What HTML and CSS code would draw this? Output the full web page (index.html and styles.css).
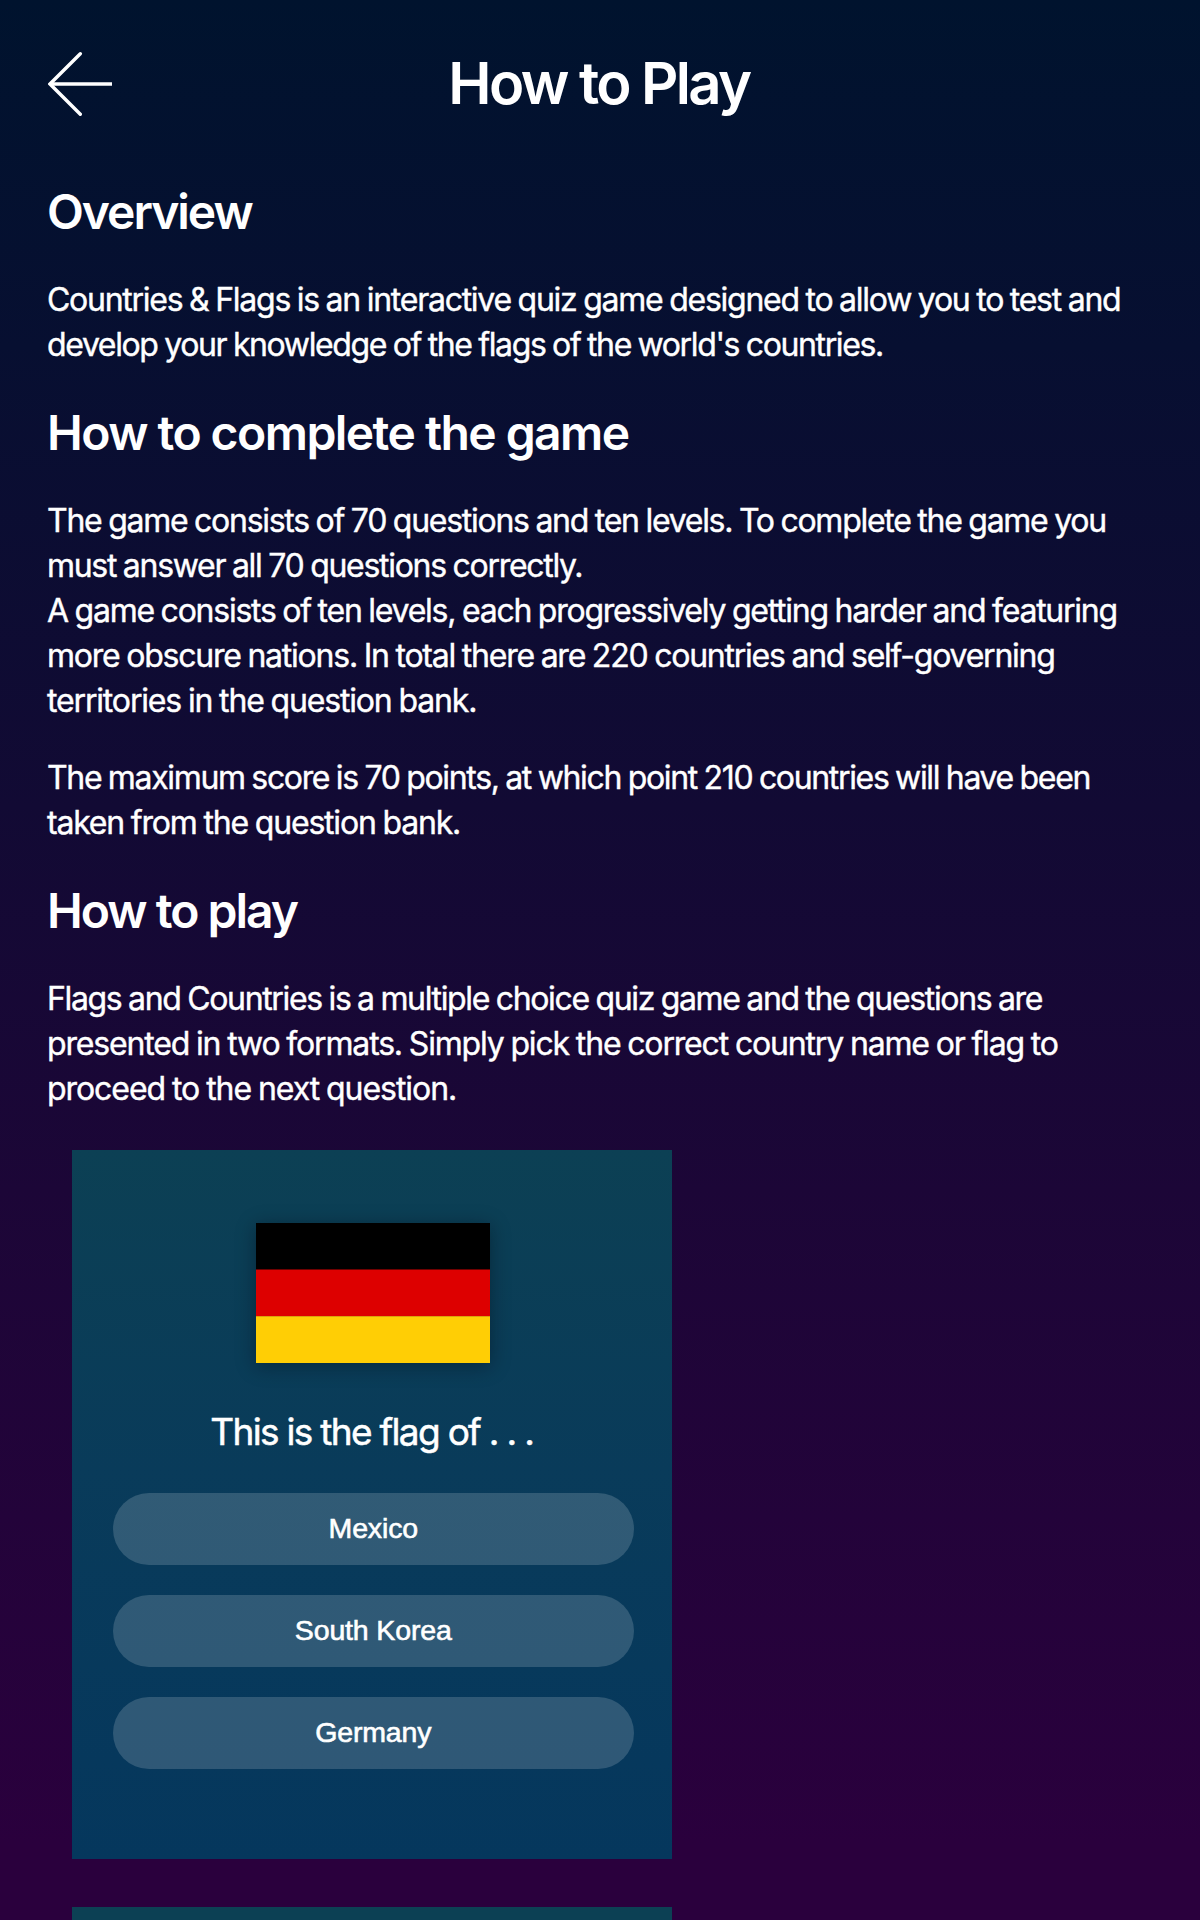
FILE: index.html
```
<!DOCTYPE html>
<html lang="en">
<head>
<meta charset="utf-8">
<title>How to Play</title>
<link rel="stylesheet" href="styles.css">
</head>
<body>
<header class="bar">
  <a class="back" aria-label="Back">
    <svg width="64" height="64" viewBox="0 0 64 64" fill="none" stroke="#fff" stroke-width="3.4"><path d="M32.300 1.800L2 32l30.300 30.200" stroke-linecap="round" stroke-linejoin="miter"/><path d="M2 32h62"/></svg>
  </a>
  <h1 class="title">How to Play</h1>
</header>
<main class="content">
  <h2 class="heading h-overview">Overview</h2>
  <p class="copy">
    <span class="line l1">Countries &amp; Flags is an interactive quiz game designed to allow you to test and</span>
    <span class="line l2">develop your knowledge of the flags of the world's countries.</span>
  </p>
  <h2 class="heading h-complete">How to complete the game</h2>
  <p class="copy">
    <span class="line l3">The game consists of 70 questions and ten levels. To complete the game you</span>
    <span class="line l4">must answer all 70 questions correctly.</span>
    <span class="line l5">A game consists of ten levels, each progressively getting harder and featuring</span>
    <span class="line l6">more obscure nations. In total there are 220 countries and self-governing</span>
    <span class="line l7">territories in the question bank.</span>
  </p>
  <p class="copy">
    <span class="line l8">The maximum score is 70 points, at which point 210 countries will have been</span>
    <span class="line l9">taken from the question bank.</span>
  </p>
  <h2 class="heading h-play">How to play</h2>
  <p class="copy">
    <span class="line l10">Flags and Countries is a multiple choice quiz game and the questions are</span>
    <span class="line l11">presented in two formats. Simply pick the correct country name or flag to</span>
    <span class="line l12">proceed to the next question.</span>
  </p>
  <section class="card">
    <svg class="flag" width="234" height="140" viewBox="0 0 234 140"><path fill="#000" d="M0 0h234v47H0z"/><path fill="#d00" d="M0 46.500h234v47H0z"/><path fill="#ffce05" d="M0 93.300h234V140H0z"/></svg>
    <div class="prompt">This is the flag of . . .</div>
    <div class="answers">
      <div class="answer">Mexico</div>
      <div class="answer">South Korea</div>
      <div class="answer">Germany</div>
    </div>
  </section>
  <section class="card-next"></section>
</main>
</body>
</html>
```
FILE: styles.css
```
* { box-sizing: border-box; }
html { background: #2a003d; }
body {
  display: flex;
  flex-direction: column;
  margin: 0;
  height: 1920px;
  background: linear-gradient(#00132e, #070f31 18%, #120a34 42%, #1c0637 62%, #2a003d 96%);
  color: #fff;
  font-family: Inter, "Liberation Sans", sans-serif;
}
.bar {
  display: grid;
  flex: none;
  grid-template-columns: 64px 1fr 64px;
  align-items: center;
  height: 168px;
  padding: 0 48px;
}
.back { display: block; height: 64px; }
.back svg { display: block; }
.title {
  margin: 0;
  padding: 0 2px 3px 0;
  text-align: center;
  font-size: 58px;
  line-height: 80px;
  font-weight: 600;
  letter-spacing: -2.6px;
}
.content {
  display: flex;
  flex: 1;
  flex-direction: column;
  padding: 10px 48px 0;
}
.heading {
  margin: 0 0 32px -1px;
  font-size: 48px;
  line-height: 67px;
  font-weight: 600;
}
.copy {
  margin: 0 0 32px -1px;
  font-size: 32px;
  line-height: 45px;
  word-spacing: -1px;
  -webkit-text-stroke: .4px #fff;
}
.line { display: block; white-space: nowrap; }
.h-overview { letter-spacing: -2.05px; }
.h-complete { letter-spacing: -1.55px; }
.h-play { letter-spacing: -2px; }
.l1 { letter-spacing: -1.26px; }
.l2 { letter-spacing: -1.37px; }
.l3 { letter-spacing: -1.27px; }
.l4 { letter-spacing: -1.29px; }
.l5 { letter-spacing: -1.25px; }
.l6 { letter-spacing: -1.23px; }
.l7 { letter-spacing: -1.16px; }
.l8 { letter-spacing: -1.34px; }
.l9 { letter-spacing: -1.19px; }
.l10 { letter-spacing: -1.34px; }
.l11 { letter-spacing: -1.16px; }
.l12 { letter-spacing: -1.06px; }
.card {
  display: flex;
  flex: none;
  flex-direction: column;
  align-items: center;
  width: 600px;
  height: 709px;
  margin: 7px 0 48px 24px;
  padding: 73px 38px 0 40.500px;
  background: linear-gradient(#0c4054, #093b5a 45%, #05375d);
}
.card-next {
  flex: 1;
  width: 600px;
  margin-left: 24px;
  background: #0c4054;
}
.flag { flex: none; box-shadow: 0 3px 18px rgba(0, 10, 20, .4); }
.prompt {
  margin: 43px 3px 0 0;
  font-size: 37px;
  line-height: 52px;
  letter-spacing: -1.69px;
  white-space: nowrap;
  -webkit-text-stroke: .5px #fff;
}
.answers {
  display: flex;
  flex-direction: column;
  gap: 30px;
  width: 100%;
  margin-top: 35px;
}
.answer {
  height: 72px;
  border-radius: 36px;
  background: rgba(255, 255, 255, .165);
  font: 28.5px/70px "Liberation Sans", Arial, sans-serif;
  letter-spacing: -.15px;
  text-align: center;
  -webkit-text-stroke: .6px #fff;
}
```
